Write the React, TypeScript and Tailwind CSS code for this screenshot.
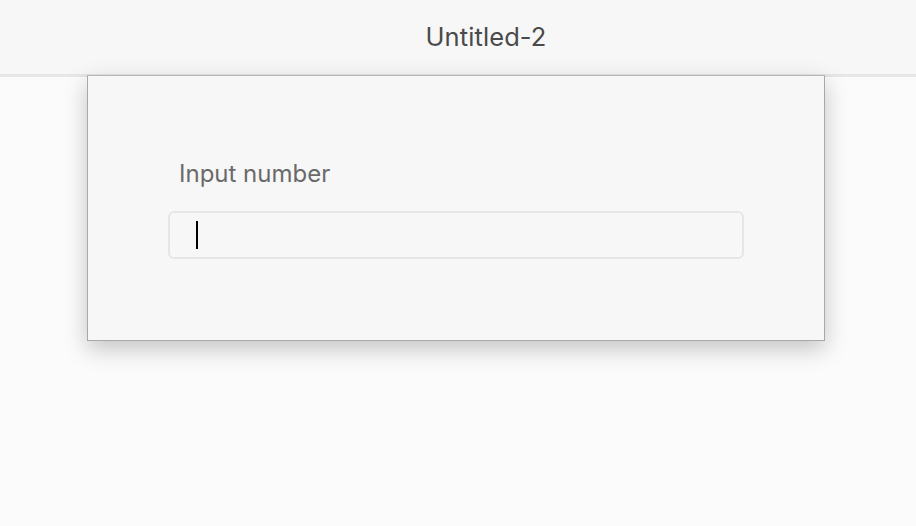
export default function App() {
  return (
    <div className="min-h-[526px] w-[916px] bg-[#fbfbfb] overflow-hidden" style={{ fontFamily: 'Inter, "Liberation Sans", sans-serif' }}>
      {/* Title bar */}
      <div className="h-[77px] bg-[#f7f7f7] border-b-[3px] border-[#e6e6e6] flex items-center justify-center pl-[56px]">
        <span className="text-[25.5px] text-[#4a4a4a] tracking-[0.1px]">Untitled-2</span>
      </div>

      {/* Sheet */}
      <div className="relative z-10 -mt-[2px] ml-[87px] w-[738px] h-[266px] bg-[#f7f7f7] border border-[#a9a9a9] border-t-[#b5b5b5] shadow-[0_8px_22px_rgba(0,0,0,0.22)]">
        <div className="pt-[84px] pl-[80px] pr-[80px]">
          <div className="text-[24px] leading-[28px] text-[#6a6a6a] pl-[11px]">Input number</div>
          <div className="mt-[23px] h-[48px] rounded-[6px] border-2 border-[#e6e6e6] bg-[#f7f7f7] flex items-center pl-[26px]">
            <div className="w-[2px] h-[28px] bg-black" />
          </div>
        </div>
      </div>
    </div>
  );
}
